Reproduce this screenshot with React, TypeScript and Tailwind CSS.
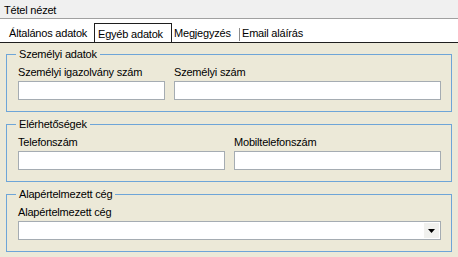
const TextBox = () => (
  <div className="h-[19px] w-full border border-[#a5acb2] bg-white" />
);

const Field = ({ label, children }: { label: string; children: React.ReactNode }) => (
  <div className="flex flex-col">
    <div className="pt-[5px] leading-[13px] whitespace-nowrap">{label}</div>
    <div className="mt-[2px]">{children}</div>
  </div>
);

const Group = ({ title, children }: { title: string; children: React.ReactNode }) => (
  <fieldset className="border border-[#6ea5d8] px-[11px] pb-[11px] pr-[10px]">
    <legend className="ml-[-2px] px-[3px] leading-[14px]">{title}</legend>
    {children}
  </fieldset>
);

const tabs = ["Általános adatok", "Egyéb adatok", "Megjegyzés", "Email aláírás"];

export default function App() {
  return (
    <div className="w-[458px] h-[257px] overflow-hidden bg-[#ece9d8] text-[11px] tracking-[-0.2px] text-black font-['Liberation_Sans',Arial,sans-serif]">
      {/* Title bar */}
      <div className="h-[19px] bg-[#f0f0f0] border-b border-[#a0a0a0] px-[4px] pt-[2px] flex items-center">
        Tétel nézet
      </div>

      {/* Tabs */}
      <div className="h-[24px] bg-white border-b border-[#1e1e1e] flex items-end">
        <div className="w-[94px] h-[19px] pl-[9px] pt-[2px] flex items-center whitespace-nowrap">{tabs[0]}</div>
        <div className="w-[78px] h-[19px] pl-[3px] pt-[2px] flex items-center border-l border-t border-r border-[#1e1e1e] whitespace-nowrap">
          {tabs[1]}
        </div>
        <div className="w-[67px] h-[19px] pl-[2px] pt-[2px] flex items-center whitespace-nowrap">{tabs[2]}</div>
        <div className="h-[13px] w-px bg-[#8c8c8c] mb-[1px] self-end" />
        <div className="h-[19px] pl-[2px] pt-[2px] flex items-center whitespace-nowrap">{tabs[3]}</div>
      </div>

      {/* Content */}
      <div className="px-[6px] pt-[4px] flex flex-col gap-[5px]">
        <Group title="Személyi adatok">
          <div className="grid grid-cols-[147px_1fr] gap-x-[9px]">
            <Field label="Személyi igazolvány szám">
              <TextBox />
            </Field>
            <Field label="Személyi szám">
              <TextBox />
            </Field>
          </div>
        </Group>

        <Group title="Elérhetőségek">
          <div className="grid grid-cols-2 gap-x-[9px]">
            <Field label="Telefonszám">
              <TextBox />
            </Field>
            <Field label="Mobiltelefonszám">
              <TextBox />
            </Field>
          </div>
        </Group>

        <Group title="Alapértelmezett cég">
          <Field label="Alapértelmezett cég">
            <div className="h-[19px] w-full border border-[#a5acb2] bg-white flex justify-end p-px">
              <div className="w-[15px] h-full bg-[#f1f1ee] flex items-center justify-center">
                <svg width="7" height="4" viewBox="0 0 7 4">
                  <path d="M0 0h7L3.5 4z" fill="#000" />
                </svg>
              </div>
            </div>
          </Field>
        </Group>
      </div>
    </div>
  );
}
